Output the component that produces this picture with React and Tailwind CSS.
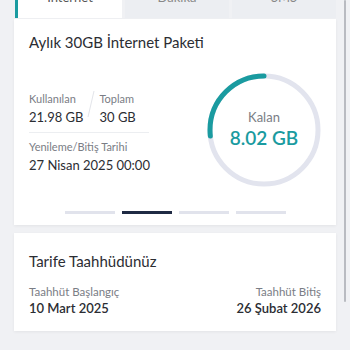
export default function App() {
  const r = 54;
  const c = 2 * Math.PI * r;
  const pct = 8.02 / 30;

  return (
    <div className="relative w-[350px] h-[350px] overflow-hidden bg-[#f0f1f4] font-['Lato',sans-serif] text-[#2b2d33]">
      {/* tabs, scrolled mostly out of view */}
      <div className="flex gap-[3px] pl-[15px] pr-[14px] mt-[-22px] h-[40px]">
        <div className="flex-1 bg-white border-l-[3px] border-[#1a9ba0] flex items-center justify-center text-[13px] text-[#555]">İnternet</div>
        <div className="flex-1 bg-[#eceef2] flex items-center justify-center text-[13px] text-[#888]">Dakika</div>
        <div className="flex-1 bg-[#eceef2] flex items-center justify-center text-[13px] text-[#888]">SMS</div>
      </div>

      {/* package card */}
      <div className="mx-[14px] mt-px bg-white h-[206px] shadow-[0_1px_3px_rgba(0,0,0,0.06)] pt-[13px] px-[15px] flex flex-col">
        <p className="text-[15px] leading-[20px] text-[#2b2d33]">Aylık 30GB İnternet Paketi</p>
        <div className="flex mt-[12px]">
          <div className="w-[125px] pt-[28px]">
            <div className="flex items-start">
              <div>
                <p className="text-[11px] leading-[14px] text-[#7a7d85]">Kullanılan</p>
                <p className="text-[13px] leading-[17px] mt-[3px]">21.98 GB</p>
              </div>
              <svg width="10" height="28" className="mx-[3px] mt-[-2px]" viewBox="0 0 10 28">
                <line x1="8" y1="1" x2="2" y2="27" stroke="#e3e5ea" strokeWidth="1" />
              </svg>
              <div>
                <p className="text-[11px] leading-[14px] text-[#7a7d85]">Toplam</p>
                <p className="text-[13px] leading-[17px] mt-[3px]">30 GB</p>
              </div>
            </div>
            <div className="h-px bg-[#eceef1] mt-[6px] w-[120px]" />
            <p className="text-[11px] leading-[14px] text-[#7a7d85] mt-[7px] whitespace-nowrap">Yenileme/Bitiş Tarihi</p>
            <p className="text-[13px] leading-[17px] mt-[3px] whitespace-nowrap">27 Nisan 2025 00:00</p>
          </div>
          <div className="ml-auto mr-0 mt-[9px] relative w-[114px] h-[114px]">
            <svg width="114" height="114" viewBox="0 0 114 114">
              <circle cx="57" cy="57" r={r} fill="none" stroke="#e2e4ee" strokeWidth="5" />
              <circle
                cx="57"
                cy="57"
                r={r}
                fill="none"
                stroke="#1a9ba0"
                strokeWidth="5"
                strokeLinecap="round"
                strokeDasharray={`${c * pct} ${c}`}
                transform="rotate(-90 57 57) scale(1 -1) translate(0 -114)"
              />
            </svg>
            <div className="absolute inset-0 flex flex-col items-center justify-center pb-[2px]">
              <p className="text-[13px] leading-[16px] text-[#7a7d85]">Kalan</p>
              <p className="text-[19px] leading-[24px] font-semibold text-[#1a9ba0] mt-[1px]">8.02 GB</p>
            </div>
          </div>
        </div>
        <div className="flex justify-center gap-[7px] mt-auto mb-[11px]">
          <div className="w-[50px] h-[3px] bg-[#e1e3ec]" />
          <div className="w-[50px] h-[3px] bg-[#1f2a44]" />
          <div className="w-[50px] h-[3px] bg-[#e1e3ec]" />
          <div className="w-[50px] h-[3px] bg-[#e1e3ec]" />
        </div>
      </div>

      {/* commitment card */}
      <div className="mx-[14px] mt-[8px] bg-white h-[98px] shadow-[0_1px_3px_rgba(0,0,0,0.06)] pt-[18px] px-[15px]">
        <p className="text-[15px] leading-[20px]">Tarife Taahhüdünüz</p>
        <div className="flex justify-between mt-[14px]">
          <div>
            <p className="text-[11.5px] leading-[14px] text-[#7a7d85]">Taahhüt Başlangıç</p>
            <p className="text-[13px] leading-[17px] font-semibold mt-[1px]">10 Mart 2025</p>
          </div>
          <div className="text-right">
            <p className="text-[11.5px] leading-[14px] text-[#7a7d85]">Taahhüt Bitiş</p>
            <p className="text-[13px] leading-[17px] font-semibold mt-[1px]">26 Şubat 2026</p>
          </div>
        </div>
      </div>

      {/* scrollbar */}
      <div className="absolute right-[4px] top-0 w-[2px] h-[302px] rounded-full bg-[#b9bbc1]" />
    </div>
  );
}
